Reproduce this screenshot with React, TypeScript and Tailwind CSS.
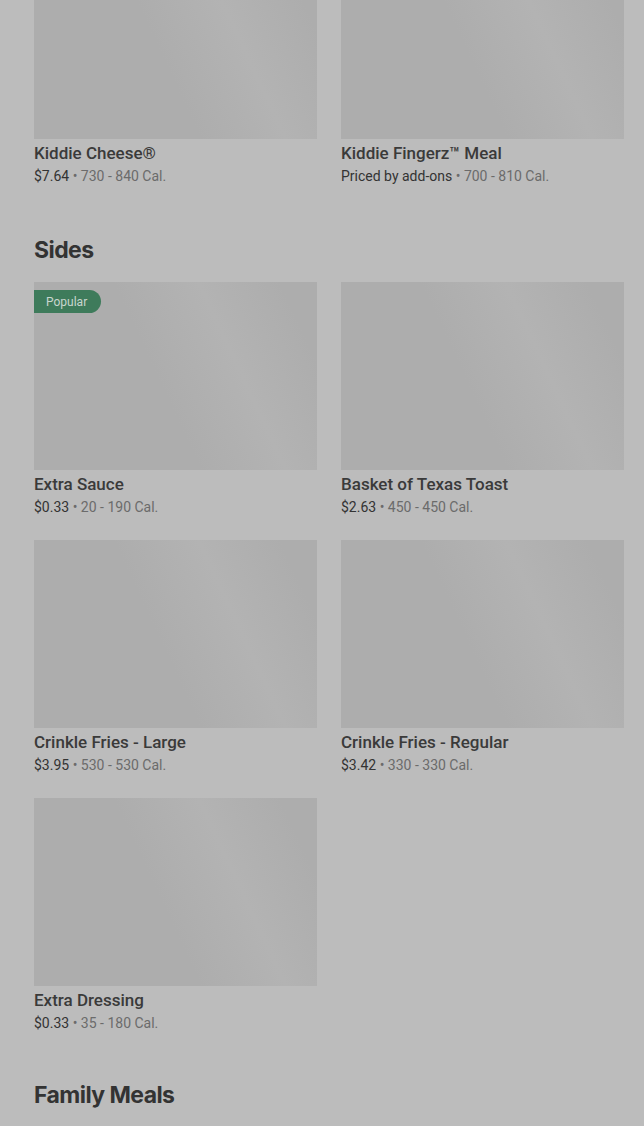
type Item = { name: string; price: string; cal: string; popular?: boolean }

const kids: Item[] = [
  { name: "Kiddie Cheese®", price: "$7.64", cal: "730 - 840 Cal." },
  { name: "Kiddie Fingerz™ Meal", price: "Priced by add-ons", cal: "700 - 810 Cal." },
]

const sides: Item[] = [
  { name: "Extra Sauce", price: "$0.33", cal: "20 - 190 Cal.", popular: true },
  { name: "Basket of Texas Toast", price: "$2.63", cal: "450 - 450 Cal." },
  { name: "Crinkle Fries - Large", price: "$3.95", cal: "530 - 530 Cal." },
  { name: "Crinkle Fries - Regular", price: "$3.42", cal: "330 - 330 Cal." },
  { name: "Extra Dressing", price: "$0.33", cal: "35 - 180 Cal." },
]

function Card({ item }: { item: Item }) {
  return (
    <div>
      <div className="relative h-[188px] bg-linear-[65deg] from-[#adadad] from-45% via-[#b3b3b3] via-68% to-[#adadad] to-90%">
        {item.popular && (
          <span className="absolute left-0 top-2 h-[23px] pl-3 pr-[14px] flex items-center rounded-r-full bg-[#3e7b5b] text-[12px] text-[#c9d6cf]">
            Popular
          </span>
        )}
      </div>
      <div className="mt-1 text-[17px] leading-5 font-medium text-[#3a3a3a]">{item.name}</div>
      <div className="mt-[3px] text-sm leading-5 text-[#333]">
        {item.price}
        <span className="text-[#6b6b6b]"> • {item.cal}</span>
      </div>
    </div>
  )
}

export default function App() {
  return (
    <div className="min-h-[1126px] bg-[#bcbcbc] pl-[34px] pr-5 overflow-hidden font-['Roboto',sans-serif]">
      <div className="grid grid-cols-2 gap-x-6 -mt-[49px]">
        {kids.map((item) => (
          <Card key={item.name} item={item} />
        ))}
      </div>

      <h2 className="mt-[50px] text-[23px] leading-7 font-bold tracking-tight text-[#333] font-['Inter',sans-serif]">
        Sides
      </h2>
      <div className="mt-[18px] grid grid-cols-2 gap-x-6 gap-y-[23px]">
        {sides.map((item) => (
          <Card key={item.name} item={item} />
        ))}
      </div>

      <h2 className="mt-[48px] text-[23px] leading-7 font-bold tracking-tight text-[#333] font-['Inter',sans-serif]">
        Family Meals
      </h2>
    </div>
  )
}
